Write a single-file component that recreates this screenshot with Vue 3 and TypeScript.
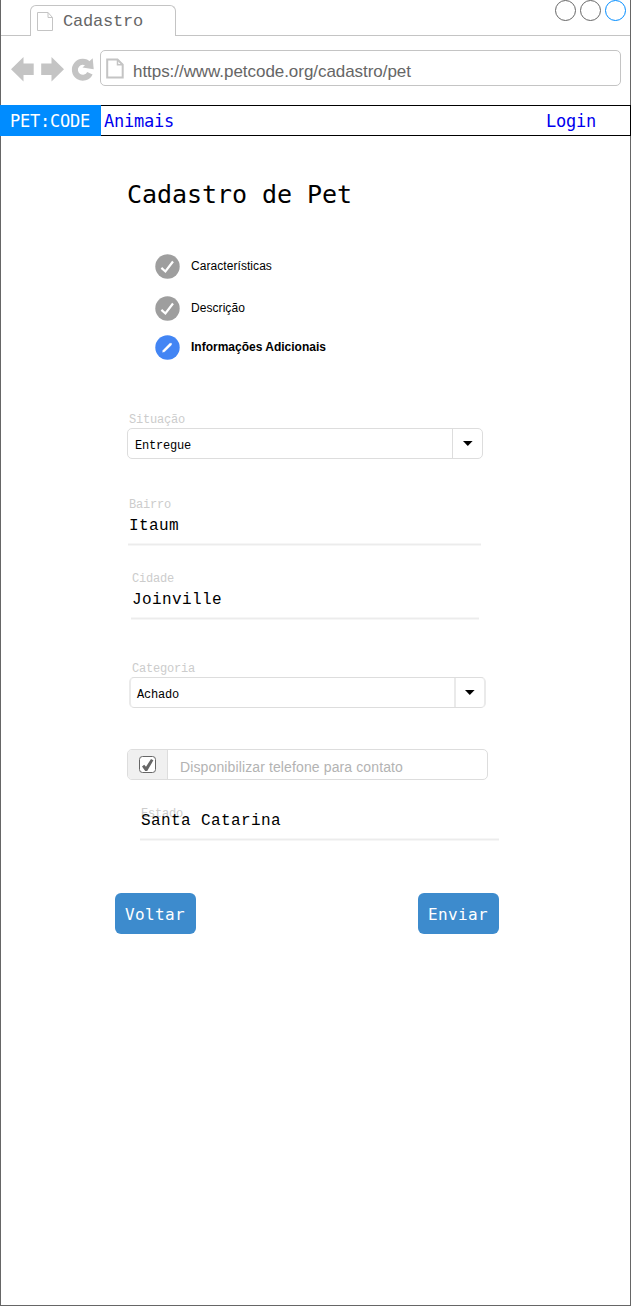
<script setup lang="ts">
interface Step {
  label: string
  state: 'done' | 'editing'
}

interface Field {
  id: string
  kind: 'select' | 'line'
  label: string
  value: string
}

const steps: Step[] = [
  { label: 'Características', state: 'done' },
  { label: 'Descrição', state: 'done' },
  { label: 'Informações Adicionais', state: 'editing' },
]

const fields: Field[] = [
  { id: 'situacao', kind: 'select', label: 'Situação', value: 'Entregue' },
  { id: 'bairro', kind: 'line', label: 'Bairro', value: 'Itaum' },
  { id: 'cidade', kind: 'line', label: 'Cidade', value: 'Joinville' },
  { id: 'categoria', kind: 'select', label: 'Categoria', value: 'Achado' },
]

const windowButtons = ['minimize', 'maximize', 'close']
</script>

<template>
  <div class="window">
    <header class="tabs">
      <div class="tab">
        <svg class="tab-page" width="18" height="21" viewBox="0 0 18 21">
          <path d="M1.5 1.5H12L16.5 6.5V19.5H1.5Z M12 1.5V6.5H16.5" fill="none" stroke="#c4c4c4" />
        </svg>
        <span class="tab-title">Cadastro</span>
      </div>
      <div class="controls">
        <span v-for="b in windowButtons" :key="b" class="control" :class="b"></span>
      </div>
    </header>

    <div class="toolbar">
      <svg class="nav-icons" width="86" height="28" viewBox="0 0 86 28" fill="#c4c4c4">
        <path d="M0 14.2L12.5 2V8.5H22.7V20H12.5V26.4Z" />
        <path d="M53 14.2L40.5 2V8.5H30.2V20H40.5V26.4Z" />
        <path d="M77.5 9.3A7.9 7.9 0 1 0 78.9 18.2" fill="none" stroke="#c4c4c4" stroke-width="6" />
        <path d="M81.7 3.2L82.7 14.2L71.5 12.5Z" />
      </svg>
      <div class="address">
        <svg class="address-page" width="18" height="21" viewBox="0 0 18 21">
          <path d="M1.2 1.5H11.5L16.7 6.7V19.5H1.2Z" fill="none" stroke="#c4c4c4" stroke-width="2" />
          <path d="M11.5 1.5V6.7H16.5" fill="none" stroke="#c4c4c4" stroke-width="1.5" />
        </svg>
        <span class="url">https://www.petcode.org/cadastro/pet</span>
      </div>
    </div>

    <nav class="navbar">
      <span class="brand">PET:CODE</span>
      <span class="link">Animais</span>
      <span class="link login">Login</span>
    </nav>

    <main class="page">
      <h1>Cadastro de Pet</h1>

      <ul class="steps">
        <li v-for="s in steps" :key="s.label" class="step" :class="s.state">
          <svg width="25" height="25" viewBox="0 0 25 25">
            <circle cx="12.5" cy="12.5" r="12.2" :fill="s.state === 'done' ? '#9e9e9e' : '#4285f4'" />
            <path v-if="s.state === 'done'" d="M6.4 13.9L10.4 17.5L18 7.5" fill="none" stroke="#fff" stroke-width="2.2" />
            <path v-else d="M7.5 17.3L8 15.2L14.8 8.3L16.6 8.3L16.5 9.9L9.6 16.7Z" fill="#fff" stroke="#fff" stroke-width="0.3" />
          </svg>
          <span>{{ s.label }}</span>
        </li>
      </ul>

      <section v-for="f in fields" :key="f.id" class="field" :class="[f.kind, f.id]">
        <label>{{ f.label }}</label>
        <div v-if="f.kind === 'select'" class="select-box">
          <span class="select-value">{{ f.value }}</span>
          <span class="select-arrow">
            <svg width="10" height="5" viewBox="0 0 10 5"><path d="M0 0H9.6L4.8 4.9Z" /></svg>
          </span>
        </div>
        <div v-else class="line-value">{{ f.value }}</div>
      </section>

      <div class="contact">
        <span class="check-cell">
          <svg width="17" height="17" viewBox="0 0 17 17">
            <rect x="0.5" y="0.5" width="16" height="16" rx="3" fill="#fff" stroke="#666" />
            <path d="M3 10.5L5.2 8.8L7 10.7L12 3L14.4 4.3L8.2 15H6.2Z" fill="#666" />
          </svg>
        </span>
        <span class="contact-text">Disponibilizar telefone para contato</span>
      </div>

      <section class="field line estado">
        <label>Estado</label>
        <div class="line-value">Santa Catarina</div>
      </section>

      <div class="actions">
        <button type="button">Voltar</button>
        <button type="button">Enviar</button>
      </div>
    </main>
  </div>
</template>

<style>
body {
  background: #fff;
}
</style>

<style scoped>
.window {
  box-sizing: border-box;
  width: 631px;
  height: 1306px;
  border: 1px solid #666;
  border-top: 0;
  background: #fff;
  font-family: "Liberation Mono", monospace;
  color: #000;
}

.tabs {
  box-sizing: border-box;
  height: 36px;
  border-bottom: 1px solid #c4c4c4;
  display: flex;
  justify-content: space-between;
  align-items: flex-start;
  padding-left: 29px;
  padding-right: 4px;
}

.tab {
  box-sizing: border-box;
  width: 146px;
  height: 31px;
  margin-top: 5px;
  border: 1px solid #c4c4c4;
  border-bottom: 0;
  border-radius: 6px 6px 0 0;
  background: #fff;
  display: flex;
  align-items: flex-start;
}

.tab-page {
  margin: 5px 0 0 5px;
}

.tab-title {
  margin-left: 9px;
  margin-top: 5px;
  font-size: 17px;
  line-height: 22px;
  letter-spacing: -0.2px;
  color: #666;
}

.controls {
  display: flex;
  gap: 4px;
}

.control {
  box-sizing: border-box;
  width: 21px;
  height: 21px;
  border: 1px solid #666;
  border-radius: 50%;
}

.control.close {
  border-color: #008cff;
}

.toolbar {
  height: 69px;
  display: flex;
  align-items: flex-start;
  padding-left: 10px;
}

.nav-icons {
  margin-top: 19px;
}

.address {
  box-sizing: border-box;
  width: 521px;
  height: 36px;
  margin: 14px 0 0 3px;
  border: 1px solid #c4c4c4;
  border-radius: 5px;
  display: flex;
}

.address-page {
  margin: 7px 0 0 5px;
}

.url {
  margin-left: 9px;
  font-family: "Liberation Sans", Arial, sans-serif;
  font-size: 17px;
  line-height: 42px;
  height: 34px;
  letter-spacing: -0.05px;
  color: #666;
}

.navbar {
  box-sizing: border-box;
  width: 631px;
  height: 31px;
  margin-left: -1px;
  border: 1px solid #000;
  border-left: 0;
  display: flex;
  font-family: "DejaVu Sans Mono", monospace;
  font-size: 17px;
  line-height: 31px;
  letter-spacing: -0.235px;
}

.brand {
  box-sizing: border-box;
  width: 101px;
  height: 31px;
  margin-top: -1px;
  padding: 1px 0 0 10px;
  background: #008cff;
  color: #fff;
}

.link {
  margin-left: 3px;
  color: #0000ee;
}

.login {
  margin-left: auto;
  margin-right: 34px;
}

.page {
  display: flex;
  flex-direction: column;
  align-items: flex-start;
}

h1 {
  margin: 44px 0 0 126px;
  font: 400 25px/30px "DejaVu Sans Mono", monospace;
  letter-spacing: -0.05px;
}

.steps {
  list-style: none;
  margin: 44px 0 0 154px;
  padding: 0;
  font: 12px/25px "Liberation Sans", Arial, sans-serif;
  letter-spacing: 0.06px;
}

.step {
  display: flex;
  height: 25px;
  gap: 11px;
  margin-bottom: 17px;
}

.step:nth-child(2) {
  margin-bottom: 14px;
}

.step.editing {
  margin-bottom: 0;
  font-weight: 700;
  letter-spacing: 0;
}

.field {
  display: flex;
  flex-direction: column;
}

label {
  height: 16px;
  padding-left: 2px;
  font-size: 12px;
  line-height: 16px;
  letter-spacing: -0.2px;
  color: #ccc;
}

.select-box {
  box-sizing: border-box;
  width: 356px;
  height: 31px;
  border: 1px solid #ddd;
  border-radius: 5px;
  display: flex;
  justify-content: space-between;
}

.select-value {
  padding-left: 7px;
  font-size: 12px;
  height: 29px;
  line-height: 34px;
  letter-spacing: -0.2px;
}

.select-arrow {
  box-sizing: border-box;
  width: 30px;
  border-left: 1px solid #ddd;
  padding: 12px 0 0 10px;
  line-height: 0;
}

.line label {
  padding-left: 1px;
}

/* soft three-pixel rule under the value */
.line-value {
  box-sizing: border-box;
  height: 33px;
  padding-left: 1px;
  background: linear-gradient(#f6f6f6 0 1px, #ececec 1px 2px, #f6f6f6 2px 3px) left bottom / 100% 3px no-repeat;
  font-size: 16px;
  line-height: 26px;
  letter-spacing: 0.4px;
}

.situacao {
  margin: 52px 0 0 126px;
}

.bairro {
  width: 353px;
  margin: 38px 0 0 127px;
}

.cidade {
  width: 348px;
  margin: 25px 0 0 130px;
}

.categoria {
  margin: 41px 0 0 128px;
}

.categoria label {
  padding-left: 3px;
}

.categoria .select-box {
  width: 357px;
  border-left: 2px solid #eaeaea;
  border-right: 2px solid #eaeaea;
}

.categoria .select-value {
  padding-left: 6px;
}

.categoria .select-arrow {
  border-left: 2px solid #eaeaea;
  padding-left: 9px;
}

.contact {
  box-sizing: border-box;
  width: 361px;
  height: 31px;
  margin: 41px 0 0 126px;
  border: 1px solid #ddd;
  border-radius: 5px;
  display: flex;
  overflow: hidden;
}

.check-cell {
  box-sizing: border-box;
  width: 40px;
  height: 29px;
  padding: 6px 0 0 11px;
  background: #f0f0f0;
  border-right: 1px solid #ddd;
  line-height: 0;
}

.contact-text {
  margin-left: 12px;
  height: 29px;
  font: 14px/35px "Liberation Sans", Arial, sans-serif;
  letter-spacing: 0.12px;
  color: #b3b3b3;
}

.estado {
  width: 359px;
  margin: 26px 0 0 139px;
}

.estado .line-value {
  margin-top: -14px;
}

.actions {
  width: 384px;
  margin: 52px 0 0 114px;
  display: flex;
  justify-content: space-between;
}

button {
  width: 81px;
  height: 41px;
  padding: 2px 1px 0 0;
  border: 0;
  border-radius: 6px;
  background: #3d8bcd;
  color: #fff;
  font: 16px/20px "DejaVu Sans Mono", monospace;
  letter-spacing: 0.37px;
}
</style>
